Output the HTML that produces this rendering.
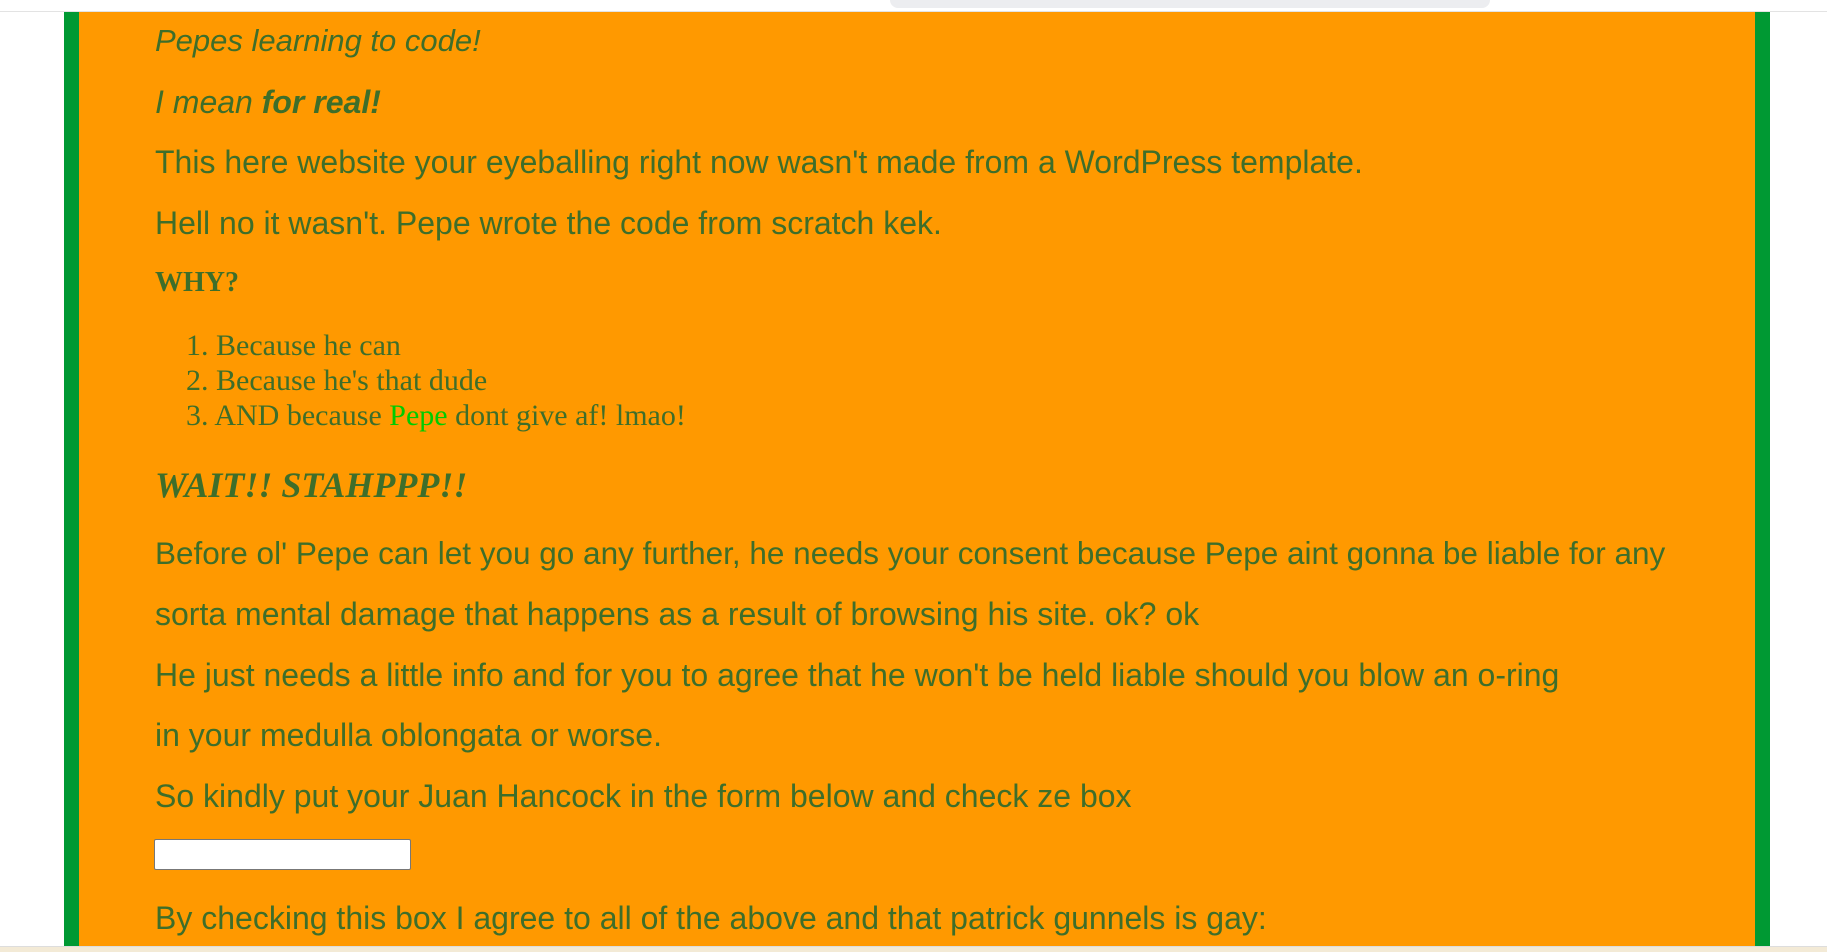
<!DOCTYPE html>
<html><head><meta charset="utf-8"><style>
html,body{margin:0;padding:0;background:#fff;width:1827px;height:952px;overflow:hidden;position:relative}
.tb{position:absolute;left:890px;top:0;width:600px;height:8px;background:#ecedf0;border-radius:0 0 10px 10px}
.line{position:absolute;left:0;top:11px;width:1827px;height:1px;background:#e3e3e3}
.gl{position:absolute;left:64px;top:12px;width:15px;height:940px;background:#009933}
.gr{position:absolute;left:1755px;top:12px;width:15px;height:940px;background:#009933}
.or{position:absolute;left:79px;top:12px;width:1676px;height:940px;background:#ff9900}
.bot{position:absolute;left:0;top:946px;width:1827px;height:6px;background:#f3ead6;border-top:1px solid #ddd}
.t{position:absolute;left:155px;color:#3e6e2a;white-space:nowrap;font-family:"Comic Sans MS","Liberation Sans",sans-serif;font-size:32px;line-height:40px}
.s{font-family:"Liberation Serif",serif;font-size:30px;line-height:35px}
.inp{position:absolute;left:154px;top:839px;width:255px;height:29px;background:#fff;border:1px solid #777;border-radius:2px}
</style></head><body>
<div class="tb"></div><div class="line"></div>
<div class="or"></div><div class="gl"></div><div class="gr"></div>
<div class="t" style="top:21px;font-style:italic;font-size:31px">Pepes learning to code!</div>
<div class="t" style="top:82px;font-style:italic">I mean <b>for real!</b></div>
<div class="t" style="top:142px">This here website your eyeballing right now wasn't made from a WordPress template.</div>
<div class="t" style="top:203px">Hell no it wasn't. Pepe wrote the code from scratch kek.</div>
<div class="t s" style="top:265px;font-weight:bold;font-size:28px">WHY?</div>
<div class="t s" style="top:328px;left:186px">1. Because he can</div>
<div class="t s" style="top:363px;left:186px">2. Because he's that dude</div>
<div class="t s" style="top:398px;left:186px">3. AND because <span style="color:#00cc00">Pepe</span> dont give af! lmao!</div>
<div class="t s" style="top:464px;font-weight:bold;font-style:italic;font-size:36px;line-height:42px">WAIT!! STAHPPP!!</div>
<div class="t" style="top:533px;font-size:31.5px">Before ol' Pepe can let you go any further, he needs your consent because Pepe aint gonna be liable for any</div>
<div class="t" style="top:594px">sorta mental damage that happens as a result of browsing his site. ok? ok</div>
<div class="t" style="top:655px">He just needs a little info and for you to agree that he won't be held liable should you blow an o-ring</div>
<div class="t" style="top:715px">in your medulla oblongata or worse.</div>
<div class="t" style="top:776px">So kindly put your Juan Hancock in the form below and check ze box</div>
<div class="inp"></div>
<div class="t" style="top:898px">By checking this box I agree to all of the above and that patrick gunnels is gay:</div>
<div class="bot"></div>
</body></html>
